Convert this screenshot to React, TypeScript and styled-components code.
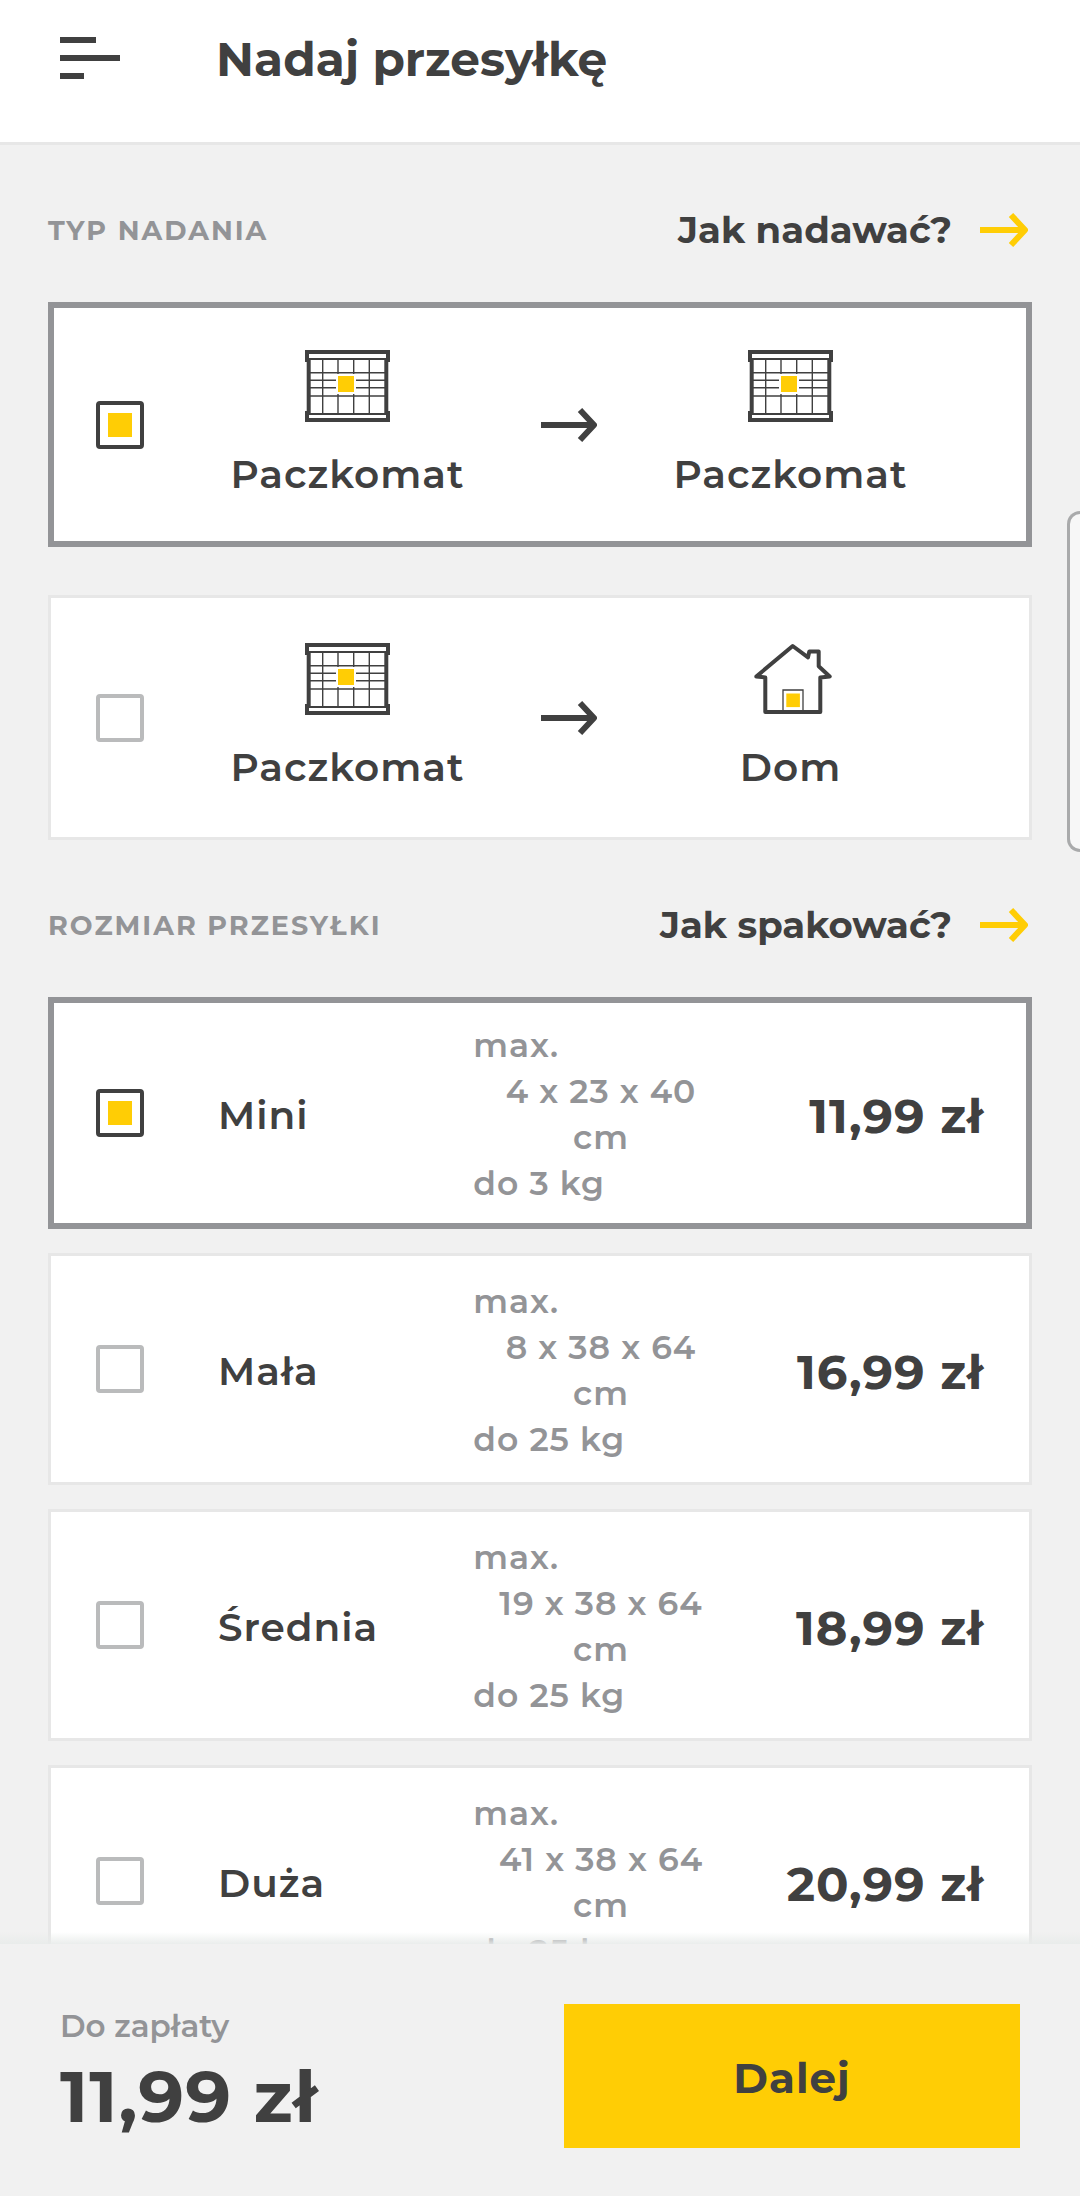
import React, { useState } from "react";
import styled, { createGlobalStyle } from "styled-components";

const ink = "#404040";
const muted = "#939497";
const yellow = "#ffcd05";
const canvas = "#f1f1f1";
const line = "#e7e7e7";

const GlobalStyle = createGlobalStyle`
  *, *::before, *::after { box-sizing: border-box; }
  body {
    margin: 0;
    background: ${canvas};
    color: ${ink};
    font-family: Montserrat, Inter, "Liberation Sans", sans-serif;
  }
  button, input { font: inherit; color: inherit; }
`;

const Screen = styled.div`
  position: relative;
  display: flex;
  flex-direction: column;
  height: 100vh;
  overflow: hidden;
`;

const Header = styled.header`
  display: flex;
  align-items: flex-start;
  gap: 96px;
  flex: none;
  padding: 28px 60px 50px;
  background: #fff;
  border-bottom: 3px solid ${line};
`;

const MenuButton = styled.button`
  display: flex;
  align-items: center;
  height: 60px;
  padding: 0;
  border: 0;
  background: none;
  cursor: pointer;
`;

const Title = styled.h1`
  margin: 0;
  font-size: 47px;
  line-height: 64px;
  font-weight: 700;
`;

const Content = styled.main`
  flex: 1;
  min-height: 0;
  overflow-y: auto;
  scrollbar-width: none;
  padding: 0 48px;
`;

const Section = styled.section``;

const SectionHead = styled.div`
  display: flex;
  align-items: center;
  justify-content: space-between;
  padding: 61px 4px 48px 0;
`;

const SectionTitle = styled.h2`
  margin: 0;
  padding-top: 2px;
  font-size: 27px;
  line-height: 46px;
  font-weight: 700;
  letter-spacing: 2px;
  text-transform: uppercase;
  color: ${muted};
`;

const HelpLink = styled.a`
  display: flex;
  align-items: center;
  gap: 28px;
  font-size: 37px;
  line-height: 48px;
  font-weight: 700;
  color: ${ink};
  text-decoration: none;
`;

const Options = styled.div<{ $gap: number }>`
  display: flex;
  flex-direction: column;
  gap: ${(p) => p.$gap}px;
`;

const Card = styled.label<{ $selected: boolean }>`
  display: flex;
  align-items: center;
  background: #fff;
  border: 3px solid ${(p) => (p.$selected ? muted : line)};
  box-shadow: ${(p) => (p.$selected ? `inset 0 0 0 3px ${muted}` : "none")};
  cursor: pointer;
`;

const RouteCard = styled(Card)`
  gap: 10px;
  padding: 45px;
`;

const SizeCard = styled(Card)`
  gap: 74px;
  padding: 20px 45px;
`;

const Tick = styled.input`
  appearance: none;
  flex: none;
  width: 48px;
  height: 48px;
  margin: 0;
  padding: 8px;
  border: 4px solid #babbbc;
  border-radius: 4px;
  background: #fff;
  cursor: pointer;

  &:checked {
    border-color: ${ink};
    background: ${yellow} content-box;
  }
`;

const Route = styled.span`
  flex: 1;
  display: grid;
  grid-template-columns: 1fr auto 1fr;
  align-items: center;
`;

const Place = styled.span`
  display: flex;
  flex-direction: column;
  align-items: center;
  gap: 27px;
  font-size: 39px;
  line-height: 50px;
  font-weight: 600;
  letter-spacing: 1px;
`;

const SizeInfo = styled.span`
  flex: 1;
  display: grid;
  grid-template-columns: repeat(3, minmax(0, 1fr));
  align-items: center;
`;

const SizeName = styled.span`
  padding-top: 4px;
  font-size: 39px;
  line-height: 50px;
  font-weight: 600;
  letter-spacing: 1px;
`;

const Limits = styled.span`
  display: flex;
  flex-direction: column;
  padding-top: 2px;
  font-size: 33px;
  line-height: 46px;
  font-weight: 600;
  letter-spacing: 1px;
  color: ${muted};
`;

const Dimensions = styled.span`
  text-align: center;
`;

const Price = styled.span`
  padding-top: 6px;
  font-size: 48px;
  line-height: 60px;
  font-weight: 700;
  letter-spacing: 1px;
  text-align: right;
  white-space: nowrap;
`;

const Footer = styled.footer`
  position: relative;
  display: flex;
  gap: 48px;
  flex: none;
  padding: 60px 60px 48px;
  background: ${canvas};

  &::before {
    content: "";
    position: absolute;
    left: 0;
    right: 0;
    bottom: 100%;
    height: 12px;
    background: linear-gradient(rgba(232, 235, 234, 0), rgba(232, 235, 234, 0.9));
    pointer-events: none;
  }
`;

const Total = styled.div`
  flex: 1;
  display: flex;
  flex-direction: column;
`;

const TotalLabel = styled.span`
  font-size: 31px;
  line-height: 44px;
  font-weight: 600;
  color: ${muted};
`;

const TotalValue = styled.strong`
  font-size: 72px;
  line-height: 96px;
  font-weight: 700;
  letter-spacing: 1px;
  white-space: nowrap;
`;

const NextButton = styled.button`
  flex: 1;
  height: 144px;
  padding: 4px 0 0;
  border: 0;
  background: ${yellow};
  font-size: 42px;
  font-weight: 700;
  letter-spacing: 1px;
  cursor: pointer;
`;

const EdgeHandle = styled.div`
  position: absolute;
  top: 511px;
  right: 0;
  width: 13px;
  height: 341px;
  border: 3px solid #a9aaab;
  border-right: 0;
  border-radius: 14px 0 0 14px;
  background: #f7f7f7;
`;

function MenuIcon() {
  return (
    <svg width="60" height="42" viewBox="0 0 60 42" fill={ink} aria-hidden="true">
      <rect width="36" height="6" />
      <rect y="18" width="60" height="6" />
      <rect y="36" width="24" height="6" />
    </svg>
  );
}

function Arrow({ width, color }: { width: number; color: string }) {
  const tip = width - 3;
  return (
    <svg width={width} height="36" viewBox={`0 0 ${width} 36`} fill="none" stroke={color} strokeWidth="6" aria-hidden="true">
      <path d={`M0 18H${tip}`} />
      <path d={`M${tip - 14} 3L${tip} 18L${tip - 14} 33`} strokeLinejoin="round" />
    </svg>
  );
}

function LockerIcon() {
  return (
    <svg width="85" height="72" viewBox="0 0 85 72" fill="none" aria-hidden="true">
      <g stroke={ink} strokeWidth="1.4">
        <path d="M17.7 9V64M33 9V64M48.7 9V64M64.3 9V64" />
        <path d="M4 22.7H81M4 30.3H81M4 37.7H81M4 46H81" />
      </g>
      <path d="M3 9H82M3 64H82" stroke={ink} strokeWidth="2" />
      <path d="M3.7 10V63M81.3 10V63" stroke={ink} strokeWidth="4" />
      <path d="M2 12V2H83V12M2 61V70H83V61" stroke={ink} strokeWidth="4" />
      <rect x="31" y="24" width="20" height="20" fill="#fff" />
      <rect x="33" y="26" width="16" height="16" fill={yellow} />
    </svg>
  );
}

function HouseIcon() {
  return (
    <svg width="85" height="72" viewBox="0 0 85 72" fill="none" stroke={ink} aria-hidden="true">
      <path
        d="M44.7 3L60 14.3L61.3 8.5H70.7V23.3L81.7 33.5L72.3 34.5V69H17.3V34.5L8.3 33.5Z"
        strokeWidth="4"
        strokeLinejoin="round"
      />
      <path d="M35 68V47H55V68" strokeWidth="1.3" />
      <rect x="38.3" y="50.5" width="13.6" height="13.6" fill={yellow} stroke="none" />
    </svg>
  );
}

const routes = [
  { id: "locker", to: "Paczkomat", Icon: LockerIcon },
  { id: "home", to: "Dom", Icon: HouseIcon },
];

const sizes = [
  { id: "mini", name: "Mini", box: "4 x 23 x 40", weight: "3", price: "11,99 zł" },
  { id: "small", name: "Mała", box: "8 x 38 x 64", weight: "25", price: "16,99 zł" },
  { id: "medium", name: "Średnia", box: "19 x 38 x 64", weight: "25", price: "18,99 zł" },
  { id: "large", name: "Duża", box: "41 x 38 x 64", weight: "25", price: "20,99 zł" },
];

export default function App() {
  const [route, setRoute] = useState("locker");
  const [size, setSize] = useState("mini");
  const total = sizes.find((s) => s.id === size)!.price;

  return (
    <>
      <GlobalStyle />
      <Screen>
        <Header>
          <MenuButton type="button" aria-label="Menu">
            <MenuIcon />
          </MenuButton>
          <Title>Nadaj przesyłkę</Title>
        </Header>

        <Content>
          <Section>
            <SectionHead>
              <SectionTitle>Typ nadania</SectionTitle>
              <HelpLink href="#nadawanie">
                Jak nadawać?
                <Arrow width={48} color={yellow} />
              </HelpLink>
            </SectionHead>
            <Options $gap={48}>
              {routes.map(({ id, to, Icon }) => (
                <RouteCard key={id} $selected={route === id}>
                  <Tick type="radio" name="route" checked={route === id} onChange={() => setRoute(id)} />
                  <Route>
                    <Place>
                      <LockerIcon />
                      Paczkomat
                    </Place>
                    <Arrow width={56} color={ink} />
                    <Place>
                      <Icon />
                      {to}
                    </Place>
                  </Route>
                </RouteCard>
              ))}
            </Options>
          </Section>

          <Section>
            <SectionHead>
              <SectionTitle>Rozmiar przesyłki</SectionTitle>
              <HelpLink href="#pakowanie">
                Jak spakować?
                <Arrow width={48} color={yellow} />
              </HelpLink>
            </SectionHead>
            <Options $gap={24}>
              {sizes.map((s) => (
                <SizeCard key={s.id} $selected={size === s.id}>
                  <Tick type="radio" name="size" checked={size === s.id} onChange={() => setSize(s.id)} />
                  <SizeInfo>
                    <SizeName>{s.name}</SizeName>
                    <Limits>
                      <span>max.</span>
                      <Dimensions>
                        {s.box}
                        <br />
                        cm
                      </Dimensions>
                      <span>do {s.weight} kg</span>
                    </Limits>
                    <Price>{s.price}</Price>
                  </SizeInfo>
                </SizeCard>
              ))}
            </Options>
          </Section>
        </Content>

        <Footer>
          <Total>
            <TotalLabel>Do zapłaty</TotalLabel>
            <TotalValue>{total}</TotalValue>
          </Total>
          <NextButton type="button">Dalej</NextButton>
        </Footer>

        <EdgeHandle />
      </Screen>
    </>
  );
}
